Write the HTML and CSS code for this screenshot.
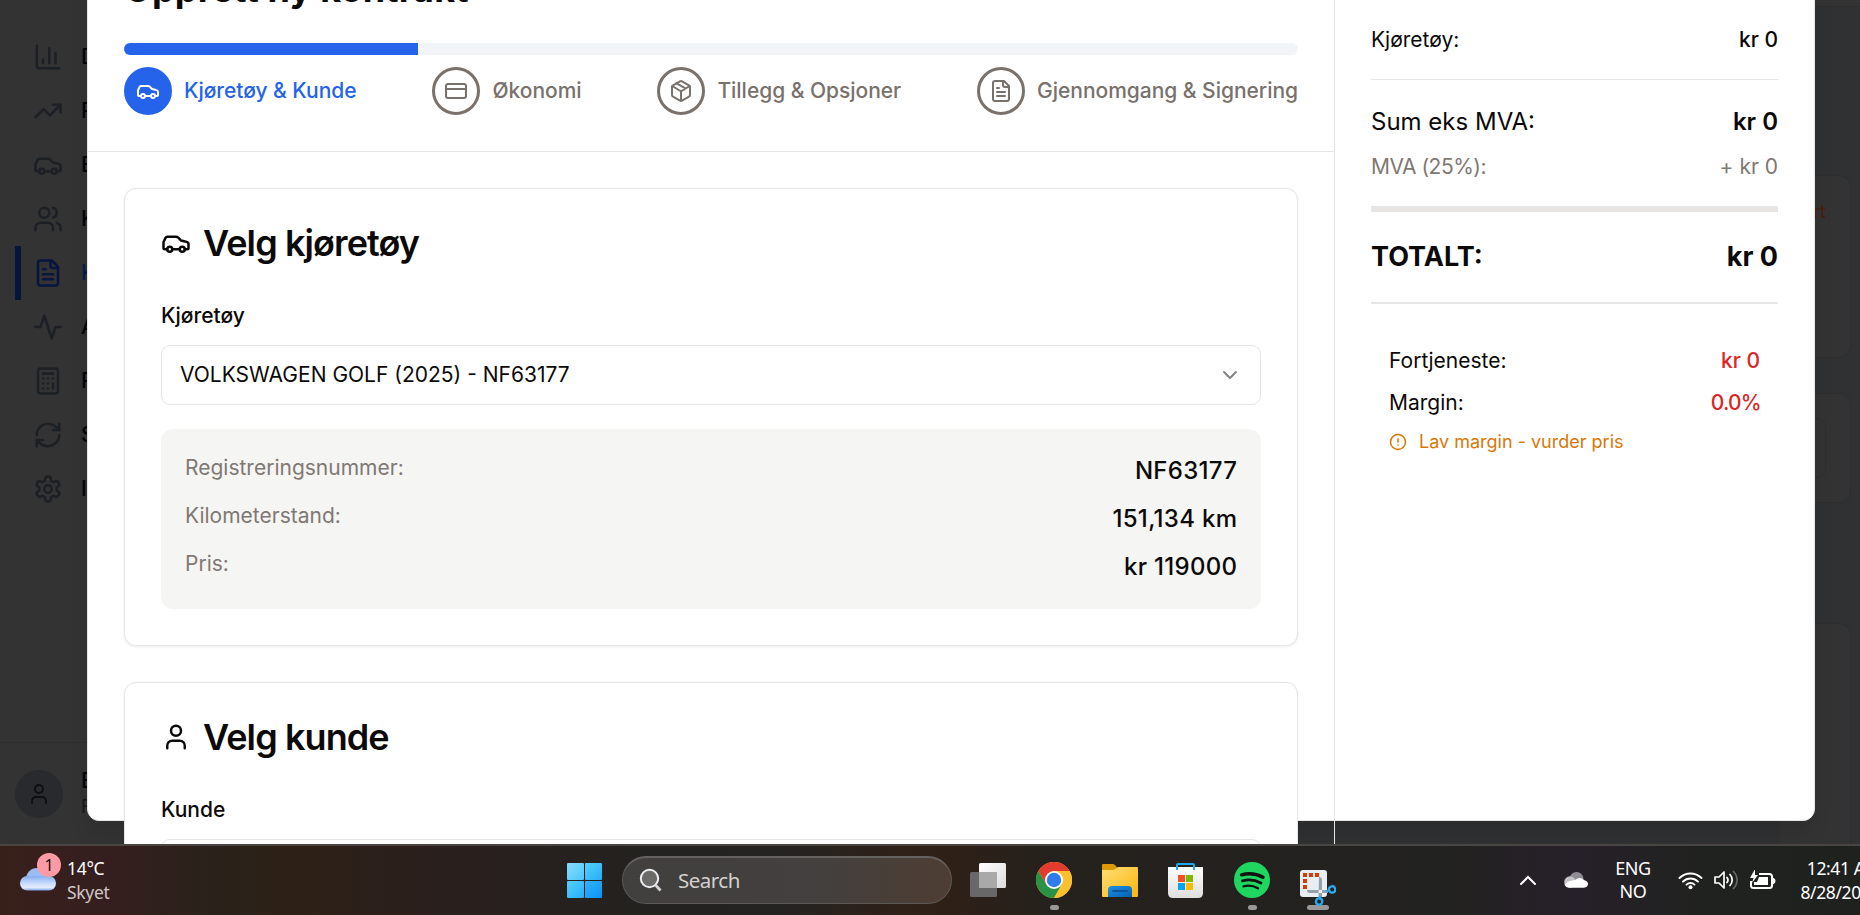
FILE: index.html
```html
<!DOCTYPE html>
<html lang="no">
<head>
<meta charset="utf-8">
<title>Opprett ny kontrakt</title>
<link rel="stylesheet" href="styles.css">
</head>
<body>
<svg class="defs" aria-hidden="true">
  <symbol id="car" viewBox="0 0 24 24"><path d="M19 17h2c.6 0 1-.4 1-1v-3c0-.9-.7-1.7-1.5-1.9C18.7 10.6 16 10 16 10s-1.3-1.4-2.2-2.3c-.5-.4-1.1-.7-1.8-.7H5c-.6 0-1.1.4-1.4.9l-1.4 2.9A3.7 3.7 0 0 0 2 12v4c0 .6.4 1 1 1h2"/><circle cx="7" cy="17" r="2"/><path d="M9 17h6"/><circle cx="17" cy="17" r="2"/></symbol>
  <symbol id="file" viewBox="0 0 24 24"><path d="M15 2H6a2 2 0 0 0-2 2v16a2 2 0 0 0 2 2h12a2 2 0 0 0 2-2V7Z"/><path d="M14 2v4a2 2 0 0 0 2 2h4M10 9H8M16 13H8M16 17H8"/></symbol>
  <symbol id="user" viewBox="0 0 24 24"><path d="M19 21v-2a4 4 0 0 0-4-4H9a4 4 0 0 0-4 4v2"/><circle cx="12" cy="7" r="4"/></symbol>
</svg>

<main class="page">
  <nav class="sidebar">
    <ul class="nav">
      <li class="nav-item"><svg class="icon" viewBox="0 0 24 24"><path d="M3 3v16a2 2 0 0 0 2 2h16M18 17V9M13 17V5M8 17v-3"/></svg><span>D</span></li>
      <li class="nav-item"><svg class="icon" viewBox="0 0 24 24"><path d="M22 7l-8.5 8.5-5-5L2 17"/><path d="M16 7h6v6"/></svg><span>P</span></li>
      <li class="nav-item"><svg class="icon"><use href="#car"/></svg><span>B</span></li>
      <li class="nav-item"><svg class="icon" viewBox="0 0 24 24"><path d="M16 21v-2a4 4 0 0 0-4-4H6a4 4 0 0 0-4 4v2"/><circle cx="9" cy="7" r="4"/><path d="M22 21v-2a4 4 0 0 0-3-3.87M16 3.13a4 4 0 0 1 0 7.75"/></svg><span>K</span></li>
      <li class="nav-item active"><svg class="icon"><use href="#file"/></svg><span>K</span></li>
      <li class="nav-item"><svg class="icon" viewBox="0 0 24 24"><path d="M22 12h-4l-3 9L9 3l-3 9H2"/></svg><span>A</span></li>
      <li class="nav-item"><svg class="icon" viewBox="0 0 24 24"><rect width="16" height="20" x="4" y="2" rx="2"/><path d="M8 6h8M16 14v4M16 10h.01M12 10h.01M8 10h.01M12 14h.01M8 14h.01M12 18h.01M8 18h.01"/></svg><span>P</span></li>
      <li class="nav-item"><svg class="icon" viewBox="0 0 24 24"><path d="M3 12a9 9 0 0 1 9-9 9.75 9.75 0 0 1 6.74 2.74L21 8"/><path d="M21 3v5h-5M21 12a9 9 0 0 1-9 9 9.75 9.75 0 0 1-6.74-2.74L3 16"/><path d="M8 16H3v5"/></svg><span>S</span></li>
      <li class="nav-item"><svg class="icon" viewBox="0 0 24 24"><path d="M12.22 2h-.44a2 2 0 0 0-2 2v.18a2 2 0 0 1-1 1.73l-.43.25a2 2 0 0 1-2 0l-.15-.08a2 2 0 0 0-2.73.73l-.22.38a2 2 0 0 0 .73 2.73l.15.1a2 2 0 0 1 1 1.72v.51a2 2 0 0 1-1 1.74l-.15.09a2 2 0 0 0-.73 2.73l.22.38a2 2 0 0 0 2.73.73l.15-.08a2 2 0 0 1 2 0l.43.25a2 2 0 0 1 1 1.73V20a2 2 0 0 0 2 2h.44a2 2 0 0 0 2-2v-.18a2 2 0 0 1 1-1.73l.43-.25a2 2 0 0 1 2 0l.15.08a2 2 0 0 0 2.73-.73l.22-.39a2 2 0 0 0-.73-2.73l-.15-.08a2 2 0 0 1-1-1.74v-.5a2 2 0 0 1 1-1.74l.15-.09a2 2 0 0 0 .73-2.73l-.22-.38a2 2 0 0 0-2.73-.73l-.15.08a2 2 0 0 1-2 0l-.43-.25a2 2 0 0 1-1-1.73V4a2 2 0 0 0-2-2z"/><circle cx="12" cy="12" r="3"/></svg><span>I</span></li>
    </ul>
    <div class="profile">
      <div class="avatar"><svg class="icon"><use href="#user"/></svg></div>
      <div class="profile-text"><span class="profile-name">B</span><span class="profile-role">F</span></div>
    </div>
  </nav>

  <div class="backdrop">
    <div class="back-header"></div>
    <div class="back-card first"><span>rt</span></div>
    <div class="back-card second"><div class="back-field"></div></div>
    <div class="back-card third"></div>
  </div>

  <section class="dialog">
    <div class="form">
      <header class="form-header">
        <h1 class="form-title">Opprett ny kontrakt</h1>
        <div class="progress"><div class="progress-fill"></div></div>
        <ol class="steps">
          <li class="step current"><span class="step-badge"><svg class="icon"><use href="#car"/></svg></span>Kjøretøy &amp; Kunde</li>
          <li class="step"><span class="step-badge"><svg class="icon" viewBox="0 0 24 24"><rect width="20" height="14" x="2" y="5" rx="2"/><path d="M2 10h20"/></svg></span>Økonomi</li>
          <li class="step"><span class="step-badge"><svg class="icon" viewBox="0 0 24 24"><path d="M11 21.73a2 2 0 0 0 2 0l7-4A2 2 0 0 0 21 16V8a2 2 0 0 0-1-1.73l-7-4a2 2 0 0 0-2 0l-7 4A2 2 0 0 0 3 8v8a2 2 0 0 0 1 1.73zM12 22V12"/><path d="M3.3 7l7.7 4.73a2 2 0 0 0 2 0L20.7 7M7.5 4.27l9 5.15"/></svg></span>Tillegg &amp; Opsjoner</li>
          <li class="step"><span class="step-badge"><svg class="icon"><use href="#file"/></svg></span>Gjennomgang &amp; Signering</li>
        </ol>
      </header>
      <div class="form-body">
        <article class="card">
          <h2 class="card-title"><svg class="icon"><use href="#car"/></svg>Velg kjøretøy</h2>
          <div class="label">Kjøretøy</div>
          <div class="select"><span>VOLKSWAGEN GOLF (2025) - NF63177</span><svg class="icon chevron" viewBox="0 0 24 24"><path d="M6 9l6 6 6-6"/></svg></div>
          <dl class="details">
            <div class="detail"><dt>Registreringsnummer:</dt><dd>NF63177</dd></div>
            <div class="detail"><dt>Kilometerstand:</dt><dd>151,134 km</dd></div>
            <div class="detail"><dt>Pris:</dt><dd>kr 119000</dd></div>
          </dl>
        </article>
        <article class="card">
          <h2 class="card-title"><svg class="icon"><use href="#user"/></svg>Velg kunde</h2>
          <div class="label">Kunde</div>
          <div class="select"></div>
        </article>
      </div>
    </div>
    <aside class="summary">
      <div class="row"><span>Kjøretøy:</span><span class="medium">kr 0</span></div>
      <div class="rule"></div>
      <div class="row subtotal"><span>Sum eks MVA:</span><span class="semibold">kr 0</span></div>
      <div class="row muted"><span class="tight">MVA (25%):</span><span>+ kr 0</span></div>
      <div class="rule thick"></div>
      <div class="row total"><span>TOTALT:</span><span>kr 0</span></div>
      <div class="rule double"></div>
      <div class="margin-box">
        <div class="row"><span>Fortjeneste:</span><span class="medium negative">kr 0</span></div>
        <div class="row"><span>Margin:</span><span class="medium negative percent">0.0%</span></div>
        <div class="warning"><svg class="icon" viewBox="0 0 24 24"><circle cx="12" cy="12" r="10"/><path d="M12 8v4M12 16h.01"/></svg><span>Lav margin - vurder pris</span></div>
      </div>
    </aside>
  </section>
</main>

<footer class="taskbar">
  <div class="weather">
    <div class="weather-icon">
      <svg width="38" height="30" viewBox="0 0 38 30"><defs><linearGradient id="cl" x1="0" y1="0" x2="0" y2="1"><stop offset="0" stop-color="#84aef0"/><stop offset=".5" stop-color="#c9dcfb"/><stop offset=".8" stop-color="#e2ebfc"/><stop offset="1" stop-color="#7ea2e8"/></linearGradient></defs><circle cx="18" cy="14" r="11" fill="#9cbdf3"/><rect x="1" y="11" width="36" height="14.500" rx="7.200" fill="url(#cl)"/><path d="M8 13q4-3 8 0" stroke="#8fb0ee" stroke-width="1.500" fill="none"/></svg>
      <span class="weather-badge">1</span>
    </div>
    <div class="weather-text"><span>14°C</span><span class="dim">Skyet</span></div>
  </div>

  <div class="apps">
    <div class="start"><i class="pane a"></i><i class="pane b"></i><i class="pane b"></i><i class="pane c"></i></div>
    <div class="search">
      <svg width="24" height="24" viewBox="0 0 24 24"><circle cx="10.500" cy="10.500" r="8.700" fill="#6b6a69" stroke="#eceef2" stroke-width="2"/><path d="M16.500 17l5 5.500" stroke="#d5d7dc" stroke-width="2.800"/></svg>
      <span>Search</span>
    </div>
    <div class="app-list">
      <div class="app"><svg viewBox="0 0 36 36"><defs><linearGradient id="tv" x1="0" y1="0" x2="1" y2="1"><stop offset="0" stop-color="#fff"/><stop offset="1" stop-color="#dcdcdc"/></linearGradient></defs><rect y="10" width="27" height="25" rx="1.500" fill="#686868"/><rect x="9" y="1" width="27" height="25" rx="1.500" fill="url(#tv)"/><path d="M9 10h18v16H9z" fill="#a9a9a9"/></svg></div>
      <div class="app running"><svg viewBox="0 0 36 36"><circle cx="18" cy="18" r="18" fill="#fbc02d"/><path d="M18 9h15.600A18 18 0 0 0 2.400 9l7.800 13.500z" fill="#e33b2e"/><path d="M2.400 9A18 18 0 0 0 18 36l7.800-13.500H10.200z" fill="#2a9245"/><path d="M18 9h15.600A18 18 0 0 1 18 36l7.800-13.500z" fill="#fbc02d"/><circle cx="18" cy="18" r="9" fill="#fff"/><circle cx="18" cy="18" r="7.200" fill="#2f7bea"/></svg></div>
      <div class="app"><svg viewBox="0 0 36 36"><defs><linearGradient id="fo" x1="0" y1="0" x2="1" y2="1"><stop offset="0" stop-color="#ffdd78"/><stop offset="1" stop-color="#fbb70c"/></linearGradient><linearGradient id="fb" x1="0" y1="0" x2="1" y2="1"><stop offset="0" stop-color="#2090e8"/><stop offset="1" stop-color="#0560b0"/></linearGradient></defs><path d="M0 8V3q0-1 1-1h10q1.500 0 2.500 1.500L16 7v3H0z" fill="#dd9a05"/><path d="M0 8h11q2 0 3.500-2 1-1 2.500-1h18q1 0 1 1v28q0 1-1 1H1q-1 0-1-1z" fill="url(#fo)"/><path d="M6 35v-7q0-4 4-4h16q4 0 4 4v7z" fill="url(#fb)"/><path d="M11 29h14" stroke="#074a8c" stroke-width="1.600" stroke-linecap="round"/></svg></div>
      <div class="app"><svg viewBox="0 0 36 36"><defs><linearGradient id="st" x1="0" y1="0" x2="0" y2="1"><stop offset="0" stop-color="#fff"/><stop offset="1" stop-color="#dedede"/></linearGradient></defs><path d="M0 5h35v26q0 5-5 5H5q-5 0-5-5z" fill="url(#st)"/><path d="M9 8V3q0-1 1-1h15q1 0 1 1v5" fill="none" stroke="#1fa8ee" stroke-width="2"/><path d="M10 13h7v7h-7z" fill="#f25022"/><path d="M18 13h7v7h-7z" fill="#7fba00"/><path d="M10 21h7v7h-7z" fill="#00a4ef"/><path d="M18 21h7v7h-7z" fill="#ffb900"/></svg></div>
      <div class="app running"><svg viewBox="0 0 36 36"><circle cx="18" cy="18" r="18" fill="#1fd760"/><path d="M7.500 12.800q11.500-3 21.500 2.500" stroke="#10130f" stroke-width="3.400" fill="none" stroke-linecap="round"/><path d="M8.500 18.800q9.500-2.600 18.500 2.200" stroke="#10130f" stroke-width="2.800" fill="none" stroke-linecap="round"/><path d="M9.500 24.300q8-1.800 14.500 2" stroke="#10130f" stroke-width="2.300" fill="none" stroke-linecap="round"/></svg></div>
      <div class="app running wide"><svg viewBox="0 0 36 44" class="snip"><rect y="8" width="27" height="27" rx="3" fill="#e9eef3"/><path d="M3 11h4v4H3zM9 11h4v4H9zM15 11h4v4h-4zM3 17h4v4H3zM3 23h4v4H3z" fill="#d83b01"/><path d="M19 15q3 0 3 3v17h-3.500zM7 28q0 3 3 3h18v-3z" fill="#95a0ad"/><circle cx="21" cy="29" r="1.200" fill="#e9eef3"/><rect x="29" y="24.500" width="6" height="6" rx="2.500" transform="rotate(-15 32 27)" fill="none" stroke="#2aa9ee" stroke-width="2.400"/><rect x="16" y="36.500" width="6" height="6" rx="2.500" transform="rotate(15 19 40)" fill="none" stroke="#2aa9ee" stroke-width="2.400"/><path d="M26 29.500l4-1.500M20.500 34l-.5 3" stroke="#2aa9ee" stroke-width="2"/></svg></div>
    </div>
  </div>

  <div class="tray">
    <svg width="18" height="12" viewBox="0 0 18 12"><path d="M2 10l7-7 7 7" stroke="#fff" stroke-width="2" fill="none" stroke-linecap="round"/></svg>
    <svg class="cloud" width="24" height="18" viewBox="0 0 24 18"><circle cx="12.500" cy="8" r="7" fill="#8f8d92"/><circle cx="6" cy="11" r="5.800" fill="#c4c3c7"/><path d="M11 9q5-4 9 0 4 1 4 4 0 3-4 3.800H5q-3.500-.3-4.500-3 2-3.800 10.500-4.800z" fill="#fff"/></svg>
    <div class="lang"><span>ENG</span><span>NO</span></div>
    <div class="status">
      <svg width="25" height="20" viewBox="0 0 25 20"><g fill="none" stroke="#fff" stroke-width="2" stroke-linecap="round"><path d="M1.500 8a15.500 15.500 0 0 1 22 0M5 11.600a10.500 10.500 0 0 1 15 0M8.500 14.600a5.800 5.800 0 0 1 8 0"/></g><circle cx="12.500" cy="17.200" r="2" fill="#fff"/></svg>
      <svg width="25" height="20" viewBox="0 0 25 20"><g fill="none" stroke="#fff" stroke-width="1.700" stroke-linecap="round" stroke-linejoin="round"><path d="M1 7h4l5-5v16l-5-5H1zM13 7.500a4 4 0 0 1 0 5M16 4.500a8 8 0 0 1 0 11"/><path d="M19.500 1.500a12 12 0 0 1 0 17" stroke="#666"/></g></svg>
      <svg width="26" height="20" viewBox="0 0 26 20"><path d="M9 4h10.500q2.500 0 2.500 2.500v9q0 2.500-2.500 2.500h-16Q1 18 1 15.500V11" fill="none" stroke="#fff" stroke-width="2"/><path d="M9 7h9v8H4v-3h3z" fill="#fff"/><path d="M23 8q2 .5 2 3t-2 3z" fill="#fff" stroke="#fff"/><path d="M5-1L0 8h3.500L2 13l6-8H5z" fill="#fff"/></svg>
    </div>
    <div class="clock"><span>12:41 AM</span><span>8/28/2025</span></div>
  </div>
</footer>
</body>
</html>
```
FILE: styles.css
```css
* { box-sizing: border-box; }

body {
  margin: 0;
  width: 1860px;
  height: 915px;
  overflow: hidden;
  display: flex;
  flex-direction: column;
  font-family: Inter, "Liberation Sans", sans-serif;
  font-size: 21px;
  line-height: 30px;
  color: #0c0a09;
  background: #333;
}

h1, h2, ul, ol, dl, dd { margin: 0; padding: 0; }
li { list-style: none; }

.defs { position: absolute; width: 0; height: 0; }

.icon {
  width: 30px;
  height: 30px;
  flex: none;
  fill: none;
  stroke: currentColor;
  stroke-width: 2;
  stroke-linecap: round;
  stroke-linejoin: round;
}

.page {
  position: relative;
  flex: none;
  height: 844px;
  overflow: hidden;
  display: flex;
  justify-content: space-between;
  background: #2f3133;
}

/* Dimmed application behind the dialog */
.sidebar {
  width: 384px;
  background: #333;
  display: flex;
  flex-direction: column;
  justify-content: space-between;
  padding-top: 30px;
}

.nav-item {
  height: 54px;
  display: flex;
  align-items: center;
  gap: 18px;
  padding-left: 33px;
  font-weight: 500;
  color: #04060b;
}
.nav-item .icon { color: #1c2025; }
.nav-item.active {
  color: #081c4a;
  padding-left: 12px;
  margin-left: 15px;
  border-left: 6px solid #06163a;
  border-radius: 0 6px 6px 0;
}
.nav-item.active .icon { color: #06163f; }

.profile {
  height: 102px;
  border-top: 1px solid #2e2e2e;
  padding: 27px 15px;
  display: flex;
  gap: 18px;
}
.avatar {
  width: 48px;
  height: 48px;
  border-radius: 50%;
  background: #282a2d;
  color: #0d1013;
  display: grid;
  place-items: center;
}
.avatar .icon { width: 24px; height: 24px; }
.profile-text { display: flex; flex-direction: column; font-size: 21px; line-height: 26px; margin-top: -2px; }
.profile-name { font-weight: 500; color: #04060b; }
.profile-role { font-size: 18px; color: #14181d; }

.backdrop { width: 80px; display: flex; flex-direction: column; }
.back-header { flex: none; height: 7px; background: #333; border-bottom: 1px solid #2e2e2e; }
.back-card {
  flex: none;
  width: 71px;
  border: 1px solid #2e2e2e;
  border-left: 0;
  border-radius: 0 12px 12px 0;
  background: #333;
}
.back-card.first { margin-top: 168px; height: 183px; padding: 21px 24px; text-align: right; font-size: 18px; color: #4a1d05; }
.back-card.second { margin-top: 35px; height: 110px; padding: 24px 24px 24px 0; }
.back-field { height: 60px; border: 1px solid #2e2e2e; border-radius: 9px; }
.back-card.third { margin-top: 120px; height: 300px; }

/* Dialog */
.dialog {
  position: absolute;
  left: 87px;
  top: -66px;
  width: 1728px;
  height: 887px;
  display: flex;
  background: #fff;
  border: 1px solid #e7e5e4;
  border-radius: 12px;
  box-shadow: 0 15px 22px -4px rgba(0, 0, 0, .12);
}

.form {
  width: 1247px;
  height: 1100px;
  flex: none;
  border-right: 1px solid #e7e5e4;
}

.form-header { padding: 36px; height: 217px; border-bottom: 1px solid #e7e5e4; }
.form-title { font-size: 36px; line-height: 36px; font-weight: 700; letter-spacing: .2px; }

.progress {
  margin-top: 36px;
  height: 12px;
  border-radius: 6px;
  overflow: hidden;
  background: #f1f5f9;
}
.progress-fill { width: 25%; height: 100%; background: #2563eb; }

.steps { margin-top: 12px; display: flex; justify-content: space-between; }
.step { display: flex; align-items: center; gap: 12px; font-weight: 500; color: #78716c; letter-spacing: -.03px; }
.step-badge {
  width: 48px;
  height: 48px;
  border: 3px solid #78716c;
  border-radius: 50%;
  display: grid;
  place-items: center;
}
.step-badge .icon { width: 24px; height: 24px; }
.step.current { color: #2563eb; }
.step.current .step-badge { background: #2563eb; border-color: #2563eb; color: #fff; }

.form-body { padding: 36px; display: flex; flex-direction: column; gap: 36px; }
.card {
  padding: 36px;
  border: 1px solid #e7e5e4;
  border-radius: 12px;
  background: #fff;
  box-shadow: 0 1px 3px rgba(0, 0, 0, .08);
}
.card-title {
  height: 36px;
  display: flex;
  align-items: center;
  gap: 12px;
  font-size: 36px;
  line-height: 36px;
  font-weight: 600;
  letter-spacing: -.9px;
}
.label { margin-top: 41px; line-height: 27px; font-weight: 500; }
.select {
  margin-top: 16px;
  height: 60px;
  border: 1px solid #e7e5e4;
  border-radius: 9px;
  padding: 0 18px;
  display: flex;
  align-items: center;
  justify-content: space-between;
}
.chevron { width: 24px; height: 24px; color: #858482; }

.details {
  margin-top: 24px;
  padding: 24px;
  border-radius: 12px;
  background: #f5f5f4;
  height: 180px;
  display: flex;
  flex-direction: column;
  gap: 12px;
}
.detail { height: 36px; display: flex; justify-content: space-between; }
.detail dt { color: #7f7873; }
.detail dd { font-size: 24px; line-height: 36px; font-weight: 500; letter-spacing: .3px; margin-right: -.3px; }

.summary { flex: 1; padding: 90px 36px 0; }
.row { display: flex; justify-content: space-between; align-items: center; }
.medium { font-weight: 500; }
.semibold { font-weight: 600; }
.muted { color: #7f7873; margin-top: 12px; }
.tight { letter-spacing: -.5px; }
.negative { color: #dc2626; }
.percent { letter-spacing: -.8px; margin-right: -.8px; }
.rule { height: 1px; margin: 24px 0; background: #e7e5e4; }
.subtotal { font-size: 24px; line-height: 36px; }
.rule.thick { height: 6px; margin: 24px 0; }
.total { font-size: 27px; line-height: 42px; font-weight: 700; }
.rule.double { height: 2px; margin: 24px 0 0; }
.margin-box { margin-top: 42px; padding: 0 18px; display: flex; flex-direction: column; gap: 12px; }
.warning { display: flex; align-items: center; gap: 12px; margin-top: -3px; font-size: 18px; color: #d97706; }
.warning .icon { width: 18px; height: 18px; }

/* Taskbar */
.taskbar {
  flex: none;
  height: 71px;
  border-top: 2px solid #484543;
  background: linear-gradient(90deg, #38201a 0, #351e1f 110px, #29221a 215px, #2d2116 290px, #2a1f1d 430px, #24221f 620px, #242321 780px, #302016 930px, #25211d 1050px, #222220 1450px, #27202a 1570px, #20221f 1700px, #1f211f 1860px);
  font-family: "Noto Sans", "Open Sans", sans-serif;
  color: #fff;
  display: flex;
  overflow: hidden;
}

.weather { flex: none; width: 567px; display: flex; padding-left: 19px; }
.weather-icon { position: relative; width: 48px; padding-top: 19px; }
.weather-badge {
  position: absolute;
  left: 18px;
  top: 7px;
  width: 24px;
  height: 24px;
  border-radius: 50%;
  background: #ff99a4;
  color: #111;
  font-size: 16px;
  line-height: 24px;
  text-align: center;
}
.weather-text { display: flex; flex-direction: column; padding-top: 10px; font-size: 17.5px; line-height: 24px; letter-spacing: -.3px; }
.dim { color: #cfc8c6; }

.apps { flex: none; display: flex; width: 940px; padding-top: 10px; }
.start { width: 35px; height: 35px; margin: 7px 20px 0 0; display: grid; grid-template-columns: 1fr 1fr; gap: 1px; }
.pane { border-radius: 1px; }
.pane.a { background: linear-gradient(135deg, #86dcfc, #4cc7fa); }
.pane.b { background: linear-gradient(135deg, #55d0fc, #25aef8); }
.pane.c { background: linear-gradient(135deg, #35b4fb, #0a92f5); }
.search {
  width: 330px;
  height: 48px;
  border: 1px solid #5b5856;
  border-top: 2px solid #64615f;
  border-radius: 24px;
  background: linear-gradient(90deg, #41403e, #43403e 60%, #4e3d33);
  display: flex;
  align-items: center;
  gap: 15px;
  padding: 0 0 2px 16px;
  font-size: 20.5px;
  letter-spacing: -.5px;
  color: #d3d1cf;
}
.app-list { display: flex; gap: 30px; margin-left: 18px; }
.app { width: 36px; padding-top: 6px; height: 54px; display: flex; flex-direction: column; align-items: center; justify-content: space-between; }
.app svg { width: 36px; height: 36px; flex: none; }
.app .snip { height: 44px; margin-bottom: -8px; z-index: 1; }
.app.running::after { content: ""; width: 9px; height: 5px; border-radius: 3px; background: #9a9896; }
.app.running.wide::after { width: 22px; }

.tray { display: flex; align-items: center; flex: none; padding-left: 12px; margin-top: -1px; }
.cloud { margin-left: 27px; }
.lang { width: 90px; display: flex; flex-direction: column; align-items: center; font-size: 18px; line-height: 23px; letter-spacing: -.4px; }
.status { display: flex; gap: 11px; }
.clock { width: 90px; margin-left: 14px; display: flex; flex-direction: column; align-items: flex-end; font-size: 17.5px; line-height: 24px; letter-spacing: -.4px; white-space: nowrap; }
```
